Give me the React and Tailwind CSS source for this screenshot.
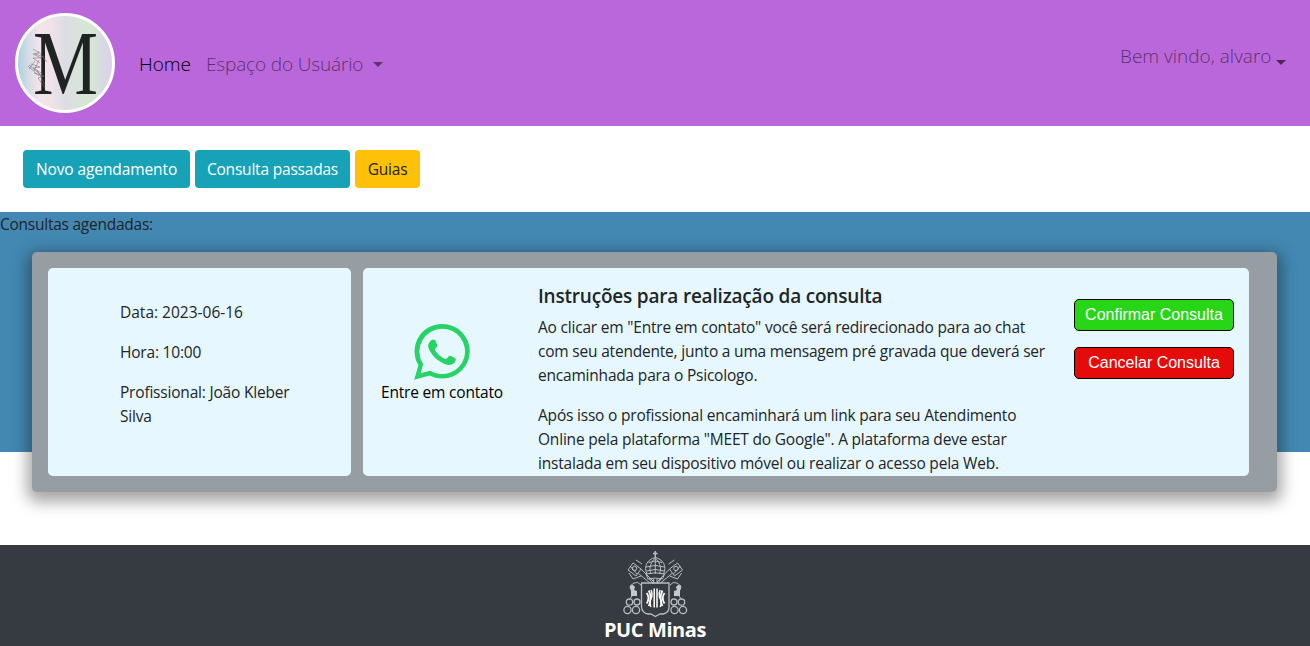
function BrandLogo() {
  return (
    <svg className="size-[100px] shrink-0" viewBox="0 0 100 100">
      <defs>
        <linearGradient id="pearl" x1="0" x2="1" y1="0" y2="0">
          <stop offset="0" stopColor="#a9cfdd" />
          <stop offset="0.12" stopColor="#d3dce6" />
          <stop offset="0.24" stopColor="#f6e4ea" />
          <stop offset="0.36" stopColor="#efe2e8" />
          <stop offset="0.5" stopColor="#dcdde4" />
          <stop offset="0.68" stopColor="#d7e6d8" />
          <stop offset="0.78" stopColor="#d6e6d3" />
          <stop offset="0.9" stopColor="#d7d9e4" />
          <stop offset="1" stopColor="#d8d2ec" />
        </linearGradient>
      </defs>
      <circle cx="50" cy="50" r="48.5" fill="url(#pearl)" stroke="#fff" strokeWidth="3" />
      <text
        x="18"
        y="81"
        textLength="65"
        lengthAdjust="spacingAndGlyphs"
        fontFamily="Liberation Serif, serif"
        fontSize="92"
        fill="#1f2324"
      >
        M
      </text>
      <g fill="none" stroke="#6d6d72" strokeWidth="0.55">
        <path d="M18 36l6 4-6 1 8 4-8 0 7 5M23 38l9 11M20 41l9 3M14 52l12 10M16 51l9 3-7 1 10 6M13 53l11 10M20 48l-6 8M24 47l-5 11M22 57l8 15M19 60l10 3-6 2 7 10" />
      </g>
    </svg>
  );
}

function WhatsappIcon() {
  return (
    <svg className="size-14" viewBox="0 0 56 56" fill="#25d366">
      <path
        fillRule="evenodd"
        d="M28.3 0A27.5 27.3 0 0 1 28.3 54.6Q21.500 54.600 15.600 51.500L.2 55.700 4.400 41.200A27.500 27.300 0 0 1 28.300 0ZM28.300 4.700A22.800 22.700 0 0 0 9.200 40L6.600 49.300 16.200 46.700A22.800 22.700 0 1 0 28.300 4.700Z"
      />
      <path d="M17.300 16.200C18 15.700 20.200 15.600 20.900 16 21.600 16.500 23.300 20.900 23.400 21.600 23.500 22.700 20.900 24.900 20.900 25.600 21 26.800 24.200 30.500 26.500 32.300 28.600 33.900 31 35 31.900 35 32.800 35 34.700 31.700 35.700 31.700 36.600 31.700 41.200 33.900 41.600 34.500 42 35.200 41.500 37.500 40.700 38.600 39.400 40.200 36.600 41.200 34.600 41.100 31.800 41 26.500 38.500 22.600 35.100 18.700 31.700 14.600 26.300 14.200 22.600 14 19.800 16.200 16.900 17.300 16.200Z" />
    </svg>
  );
}

function PucLogo() {
  return (
    <div className="flex w-[110px] flex-col items-center">
      <svg className="h-[73px] w-[110px] shrink-0" viewBox="0 0 110 73">
        <g fill="none" stroke="#b9bcc1" strokeWidth="1">
          <path d="M55.300 6v6M53 8.500h4.600" strokeWidth="1.500" />
          <path d="M47 29C43 21 48 14 55.300 12.500 62.500 14 67.500 21 63.500 29M51 29C48 22 52 16 55.300 13 58.500 16 62.500 22 59.500 29M55.300 13v16M46 22q9.500-3 18.500 0M48.500 17.500q7-3 13.500 0M46.500 26q9-3 17.500 0" />
          <path d="M46 29q9-2.500 18.500 0l-2 5q-7-2-14.500 0ZM53.500 34v5M57 34v5M49 33l4 6M61.500 33l-4 6" />
          <path d="M41 24L55 38M38.500 28.500L50 38M69.500 24L57 37M72 28.500L60.500 38M33 18l8 6-5 7-8-6ZM36 15l6 4M29 28l4 6 8-3M77.500 18l-8 6 5 7 8-6ZM74.500 15l-6 4M81.500 28l-4 6-8-3M30 21l7 8M80.500 21l-7 8" />
          <circle cx="34.500" cy="23.500" r="2.200" /><circle cx="76" cy="23.500" r="2.200" />
          <path d="M41.500 38H69V62Q69 68 63 69H60L55.300 71.500 51 69H48Q42 68 41.500 62Z" strokeWidth="1.300" />
          <path d="M41 40q-3-4-7-2l-4 3M70 40q3-4 7-2l4 3" />
          <path d="M32 51l-3 4M79 51l3 4" />
          <g strokeWidth="1.300">
            <circle cx="29.500" cy="57" r="3.200" /><circle cx="37" cy="57" r="3" />
            <circle cx="27.500" cy="65" r="3.600" /><circle cx="36" cy="65" r="3.600" />
            <circle cx="81.500" cy="57" r="3.200" /><circle cx="74" cy="57" r="3" />
            <circle cx="83" cy="65" r="3.600" /><circle cx="74.500" cy="65" r="3.600" />
          </g>
        </g>
        <g fill="#c6c8cc">
          <path d="M29.500 42q3-4 5.500 0l-1 3 3 1v5h-6v-5ZM81.500 42q-3-4-5.500 0l1 3-3 1v5h6v-5Z" />
        </g>
        <g fill="none" stroke="#fff" strokeWidth="1.800">
          <path d="M54.200 43.500v19M57 43.500v19M51 45q2 4 0 8.500t0 8.500M60.200 45q-2 4 0 8.500t0 8.500" strokeWidth="1.500" />
          <path d="M48.800 45.500q3.500 7.500 0 15.500M62.400 45.500q-3.500 7.500 0 15.500M46.700 48q3.500 5 0 10.500M64.500 48q-3.500 5 0 10.500" />
        </g>
      </svg>
      <span className="whitespace-nowrap text-[20px] font-bold leading-6 tracking-[-0.4px] text-white">PUC Minas</span>
    </div>
  );
}

function Caret({ className }) {
  return <span className={`border-x-[5px] border-t-[5px] border-x-transparent ${className}`} />;
}

export default function App() {
  return (
    <div className="flex h-[646px] w-[1310px] flex-col overflow-hidden bg-white font-['Open_Sans',sans-serif] text-[15.5px] leading-6 tracking-[-0.2px] text-[#212529]">
      <nav className="flex h-[126px] shrink-0 items-center bg-[#ba67db] pl-[15px] pr-6 text-[19px] font-light tracking-normal text-black/55">
        <BrandLogo />
        <a className="ml-6 mt-0.5 w-[51px] whitespace-nowrap text-black">Home</a>
        <a className="ml-4 mt-0.5 flex items-center whitespace-nowrap tracking-[-0.15px]">
          <span className="w-[167px]">Espaço do Usuário</span>
          <Caret className="border-t-black/50" />
        </a>
        <a className="mb-3.5 ml-auto flex items-center whitespace-nowrap">
          <span className="w-[156px]">Bem vindo, alvaro</span>
          <Caret className="mt-3 border-t-black/60" />
        </a>
      </nav>

      <div className="flex h-[86px] shrink-0 items-center gap-[5px] pl-[23px] text-white">
        <button className="h-[38px] w-[167px] whitespace-nowrap rounded bg-[#17a2b8] tracking-[-0.1px]">Novo agendamento</button>
        <button className="h-[38px] w-[155px] whitespace-nowrap rounded bg-[#17a2b8]">Consulta passadas</button>
        <button className="h-[38px] w-[65px] rounded bg-[#ffc107] text-[#212529]">Guias</button>
      </div>

      <main className="h-60 shrink-0 bg-[#4388b2]">
        <p className="h-10 whitespace-nowrap tracking-[-0.25px]">Consultas agendadas:</p>
        <section className="ml-8 flex h-60 w-[1245px] gap-3 rounded-[5px] bg-[#969da3] p-4 shadow-[0_5px_15px_5px_rgba(0,0,0,0.35)]">
          <div className="flex w-[303px] flex-col gap-4 whitespace-nowrap rounded-[5px] bg-[#e6f7ff] pl-[72px] pt-8">
            <p className="tracking-normal">Data: 2023-06-16</p>
            <p>Hora: 10:00</p>
            <p>Profissional: João Kleber<br />Silva</p>
          </div>
          <div className="flex w-[886px] whitespace-nowrap rounded-[5px] bg-[#e6f7ff]">
            <div className="flex w-[158px] flex-col items-center pt-14 text-black">
              <WhatsappIcon />
              <span>Entre em contato</span>
            </div>
            <div className="ml-[17px] w-[536px] pt-4">
              <h5 className="mb-[7px] text-[19px] font-semibold leading-6">Instruções para realização da consulta</h5>
              <p className="mb-4">
                Ao clicar em "Entre em contato" você será redirecionado para ao chat<br />
                com seu atendente, junto a uma mensagem pré gravada que deverá ser<br />
                encaminhada para o Psicologo.
              </p>
              <p>
                Após isso o profissional encaminhará um link para seu Atendimento<br />
                Online pela plataforma "MEET do Google". A plataforma deve estar<br />
                instalada em seu dispositivo móvel ou realizar o acesso pela Web.
              </p>
            </div>
            <div className="flex flex-col gap-4 pt-[31px] font-['Liberation_Sans',sans-serif] text-base leading-6 tracking-normal text-white">
              <button className="h-8 w-40 rounded-[5px] border border-black bg-[#27d617]">Confirmar Consulta</button>
              <button className="h-8 w-40 rounded-[5px] border border-black bg-[#e50b0b]">Cancelar Consulta</button>
            </div>
          </div>
        </section>
      </main>

      <footer className="mt-auto flex h-[101px] shrink-0 justify-center bg-[#363a41]">
        <PucLogo />
      </footer>
    </div>
  );
}
